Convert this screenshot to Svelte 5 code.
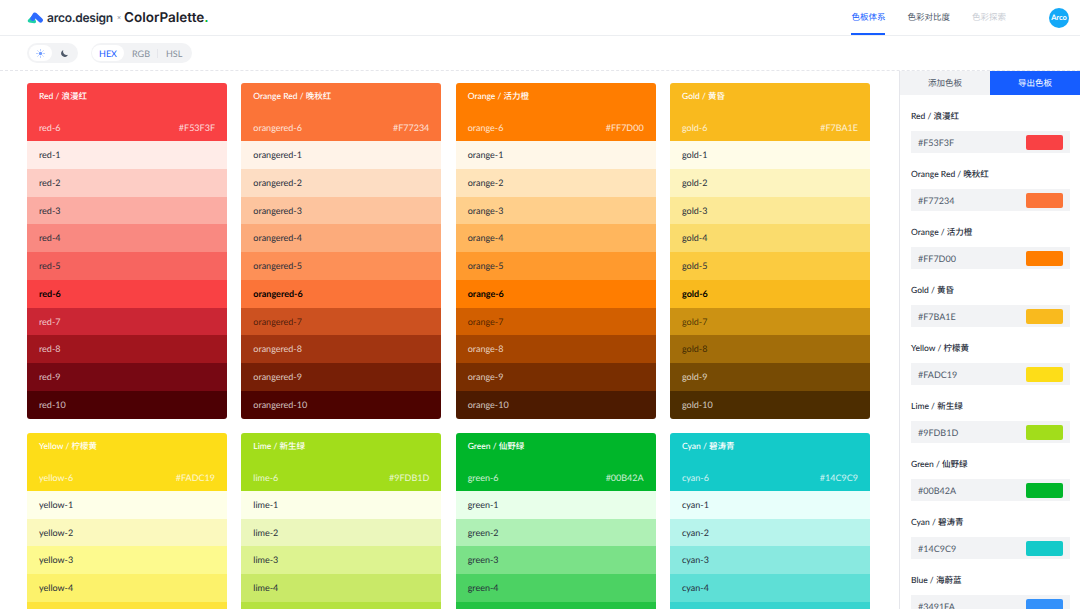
<script>
  const palettes = [
    { key: 'red', title: 'Red / 浪漫红', hex: '#F53F3F', main: '#F94144', dark: [], colors: ['#FFECE8', '#FDCDC5', '#FBACA3', '#F98981', '#F76560', '#F94144', '#CB2634', '#A1151E', '#770813', '#4D0004'] },
    { key: 'orangered', title: 'Orange Red / 晚秋红', hex: '#F77234', main: '#FB7438', dark: [6], colors: ['#FFF3E8', '#FDDDC3', '#FDC49E', '#FCAB7B', '#FD9057', '#FB7438', '#CC5120', '#A23511', '#771F06', '#4D0300'] },
    { key: 'orange', title: 'Orange / 活力橙', hex: '#FF7D00', main: '#FF7D00', dark: [6], colors: ['#FFF7E8', '#FFE4BA', '#FFCF8B', '#FFB65D', '#FF9A2E', '#FF7D00', '#D25F00', '#A64500', '#792E00', '#4D1B00'] },
    { key: 'gold', title: 'Gold / 黄昏', hex: '#F7BA1E', main: '#F9BA1E', dark: [6, 7], colors: ['#FFFCE8', '#FDF4BF', '#FCE996', '#FADC6D', '#FBCB40', '#F9BA1E', '#CC9213', '#A26D0A', '#774B04', '#4D2D00'] },
    { key: 'yellow', title: 'Yellow / 柠檬黄', hex: '#FADC19', main: '#FDDD18', dark: [], colors: ['#FEFFE8', '#FBF9BE', '#FDFA8E', '#FCF26B', '#FDE43C', '#FDDD18', '#CFAF0F', '#A38408', '#785D03', '#4D3800'] },
    { key: 'lime', title: 'Lime / 新生绿', hex: '#9FDB1D', main: '#A2DD1B', dark: [], colors: ['#FCFFE8', '#EBF7BC', '#DDF390', '#C9E968', '#B5E241', '#A2DD1B', '#7EB712', '#5F940A', '#437004', '#2A4D00'] },
    { key: 'green', title: 'Green / 仙野绿', hex: '#00B42A', main: '#00B62A', dark: [], colors: ['#E8FFEA', '#AFF0B5', '#7BE188', '#4CD263', '#23C343', '#00B62A', '#009A29', '#008026', '#006622', '#004D1C'] },
    { key: 'cyan', title: 'Cyan / 碧涛青', hex: '#14C9C9', main: '#14CAC9', dark: [], colors: ['#E8FFFB', '#B7F4EC', '#89E9E0', '#5EDFD6', '#37D4CF', '#14CAC9', '#0DA5AA', '#07828B', '#03616C', '#00424D'] }
  ];

  const exported = [
    ...palettes.map((p) => ({ title: p.title, hex: p.hex, color: p.main })),
    { title: 'Blue / 海蔚蓝', hex: '#3491FA', color: '#3491FA' }
  ];
</script>

<div class="page">
  <header class="topbar">
    <div class="brand">
      <svg class="logo" width="16" height="12" viewBox="0 0 16 12" aria-hidden="true">
        <path d="M2.3 8.8 L5.5 5.5 L7.5 9.6 Z" fill="#1FD1A8" stroke="#1FD1A8" stroke-width="3.2" stroke-linejoin="round" />
        <path d="M5.6 6.6 L7.8 2.8 L13.6 8.2" fill="none" stroke="#2E6BFF" stroke-width="4.6" stroke-linecap="round" stroke-linejoin="round" />
      </svg>
      <span class="arco">arco.design</span>
      <span class="times">×</span>
      <span class="cp">ColorPalette<span class="dot">.</span></span>
    </div>
    <nav class="nav">
      <span class="nav-item active">色板体系</span>
      <span class="nav-item">色彩对比度</span>
      <span class="nav-item disabled">色彩探索</span>
    </nav>
    <div class="avatar">Arco</div>
  </header>

  <div class="toolbar">
    <div class="pill-group theme">
      <span class="pill on">
        <svg width="9" height="9" viewBox="0 0 9 9" aria-hidden="true">
          <circle cx="4.5" cy="4.5" r="1.7" fill="#6E9BFF" />
          <g stroke="#8FB2FF" stroke-width="0.8" stroke-linecap="round">
            <path d="M4.5.6v.8M4.5 7.6v.8M.6 4.5h.8M7.6 4.5h.8M1.8 1.8l.5.5M6.7 6.7l.5.5M1.8 7.2l.5-.5M6.7 2.3l.5-.5" />
          </g>
        </svg>
      </span>
      <span class="pill">
        <svg width="9" height="9" viewBox="0 0 9 9" aria-hidden="true">
          <path d="M3.4 1A3.6 3.6 0 1 0 8 5.8 3.6 3.6 0 0 1 3.4 1Z" fill="#4E5969" />
        </svg>
      </span>
    </div>
    <div class="pill-group format">
      <span class="pill on fmt">HEX</span>
      <span class="fmt">RGB</span>
      <span class="sep"></span>
      <span class="fmt">HSL</span>
    </div>
  </div>

  <div class="body">
    <main class="cards">
      {#each palettes as p}
        <section class="card">
          <div class="card-head" style:background={p.main}>
            <div class="card-title">{p.title}</div>
            <div class="card-sub">
              <span>{p.key}-6</span>
              <span>{p.hex}</span>
            </div>
          </div>
          {#each p.colors as c, i}
            <div
              class="shade"
              class:current={i === 5}
              class:light={i > 5 && !p.dark.includes(i)}
              class:deep={p.dark.includes(i)}
              style:background={c}
            >
              {p.key}-{i + 1}
            </div>
          {/each}
        </section>
      {/each}
    </main>

    <aside class="side">
      <div class="tabs">
        <div class="tab">添加色板</div>
        <div class="tab selected">导出色板</div>
      </div>
      <div class="list">
        {#each exported as item}
          <div class="entry">
            <div class="entry-title">{item.title}</div>
            <div class="entry-box">
              <span>{item.hex}</span>
              <span class="swatch" style:background={item.color}></span>
            </div>
          </div>
        {/each}
      </div>
    </aside>
  </div>
</div>

<style>
  :global(body) {
    margin: 0;
    background: #fff;
  }
  .page {
    width: 1080px;
    height: 609px;
    overflow: hidden;
    display: flex;
    flex-direction: column;
    font-family: 'Lato', 'Noto Sans CJK SC', sans-serif;
    color: #1d2129;
    text-rendering: geometricPrecision;
  }
  .topbar {
    height: 35px;
    flex: none;
    display: flex;
    align-items: center;
    padding: 0 11px 0 27px;
    border-bottom: 1px solid #eceef1;
  }
  .brand {
    display: flex;
    align-items: center;
    flex: 1;
  }
  .logo {
    margin-right: 4px;
  }
  .arco {
    font-family: 'Inter', sans-serif;
    font-size: 12px;
    font-weight: 600;
    letter-spacing: -0.25px;
    color: #272e3b;
  }
  .times {
    font-size: 7px;
    color: #86909c;
    margin: 0 3px 0 4px;
  }
  .cp {
    font-family: 'Inter', sans-serif;
    font-size: 13.5px;
    font-weight: 600;
    color: #1d2129;
  }
  .dot {
    color: #00b42a;
  }
  .nav {
    display: flex;
    gap: 22px;
    margin-right: 43px;
    height: 100%;
  }
  .nav-item {
    font-size: 8.5px;
    line-height: 35px;
    color: #4e5969;
    height: 35px;
    box-sizing: border-box;
    font-family: 'Noto Sans CJK SC', sans-serif;
  }
  .nav-item.active {
    color: #165dff;
    border-bottom: 2px solid #165dff;
  }
  .nav-item.disabled {
    color: #c9cdd4;
  }
  .avatar {
    width: 20px;
    height: 20px;
    border-radius: 50%;
    background: #14a9f8;
    color: #fff;
    font-size: 7.5px;
    line-height: 20px;
    text-align: center;
    font-weight: 700;
  }
  .toolbar {
    height: 34px;
    flex: none;
    display: flex;
    align-items: center;
    gap: 13px;
    padding-left: 27px;
    border-bottom: 1px dashed #e5e6eb;
  }
  .pill-group {
    height: 20px;
    border-radius: 10px;
    background: #f2f3f5;
    display: flex;
    align-items: center;
    box-sizing: border-box;
    padding: 0 2px;
  }
  .theme {
    width: 51px;
  }
  .pill {
    width: 23px;
    height: 16px;
    border-radius: 8px;
    display: flex;
    align-items: center;
    justify-content: center;
  }
  .theme .pill + .pill {
    margin-left: 2px;
  }
  .pill.on {
    background: #fff;
  }
  .format {
    width: 101px;
    padding: 0 1px;
    font-size: 9px;
    color: #86909c;
  }
  .fmt {
    font-family: 'Lato', sans-serif;
    text-align: center;
    margin-left: 8px;
  }
  .pill.fmt {
    width: 32px;
    color: #165dff;
    margin-left: 0;
  }
  .sep {
    width: 1px;
    height: 9px;
    background: #e5e6eb;
    margin-left: 7px;
  }
  .body {
    flex: 1;
    display: flex;
    min-height: 0;
  }
  .cards {
    width: 899px;
    flex: none;
    box-sizing: border-box;
    padding: 12px 0 0 27px;
    display: grid;
    grid-template-columns: repeat(4, 200px);
    column-gap: 14.33px;
    row-gap: 14.4px;
    align-content: start;
    overflow: hidden;
  }
  .card {
    height: 335.5px;
    border-radius: 3px;
    overflow: hidden;
  }
  .card-head {
    height: 58px;
    box-sizing: border-box;
    padding: 7px 12px 0;
    color: #fff;
    font-size: 9px;
  }
  .card-title {
    font-weight: 500;
    line-height: 13px;
    font-size: 8.5px;
  }
  .card-sub {
    display: flex;
    justify-content: space-between;
    margin-top: 18px;
    line-height: 13px;
    opacity: 0.8;
  }
  .shade {
    height: 27.75px;
    line-height: 27.75px;
    padding-left: 12px;
    font-size: 9px;
    color: #272e3b;
  }
  .shade.current {
    font-weight: 700;
    color: #000;
  }
  .shade.light {
    color: rgba(255, 255, 255, 0.75);
  }
  .shade.deep {
    color: rgba(0, 0, 0, 0.65);
  }
  .side {
    flex: 1;
    border-left: 1px solid #e5e6eb;
    overflow: hidden;
  }
  .tabs {
    display: flex;
    height: 24px;
  }
  .tab {
    flex: 1;
    text-align: center;
    line-height: 24px;
    font-size: 8.5px;
    background: #f2f3f5;
    color: #4e5969;
    font-family: 'Noto Sans CJK SC', sans-serif;
  }
  .tab.selected {
    background: #165dff;
    color: #fff;
  }
  .list {
    padding: 14px 10px 0 11px;
  }
  .entry {
    height: 58px;
  }
  .entry-title {
    font-size: 8.5px;
    font-weight: 500;
    line-height: 14px;
    color: #272e3b;
  }
  .entry-box {
    margin-top: 8px;
    height: 22px;
    box-sizing: border-box;
    padding: 0 7px;
    background: #f2f3f5;
    display: flex;
    align-items: center;
    justify-content: space-between;
    font-size: 9px;
    color: #4e5969;
  }
  .swatch {
    width: 37px;
    height: 15px;
    border-radius: 2px;
  }
</style>
